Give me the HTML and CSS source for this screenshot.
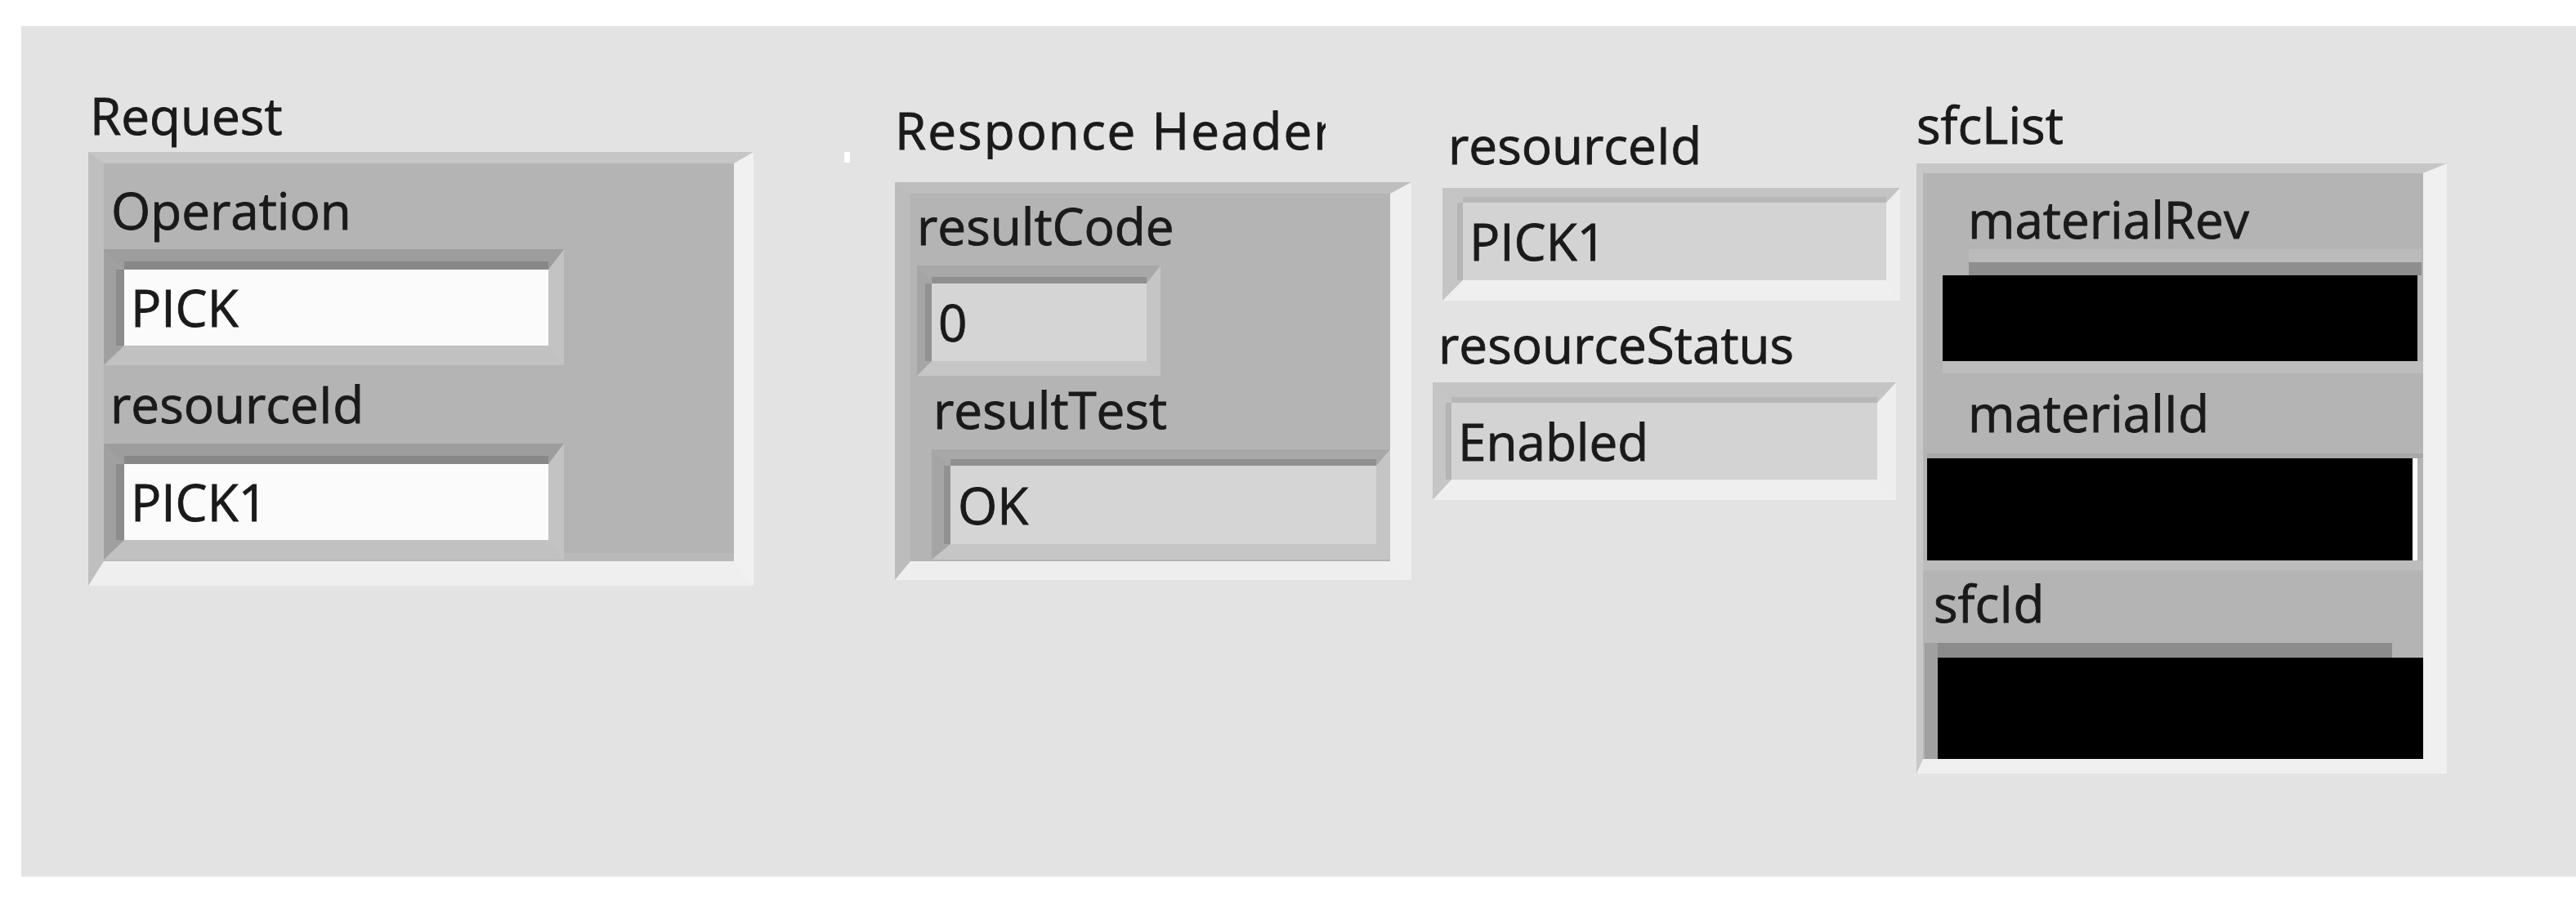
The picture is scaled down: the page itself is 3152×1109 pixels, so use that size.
FILE: index.html
```html
<!DOCTYPE html>
<html lang="en">
<head>
<meta charset="utf-8">
<title>Front panel</title>
<link rel="stylesheet" href="styles.css">
</head>
<body>
<main class="panel">
  <span class="tick"></span>

  <section class="col col-request">
    <div class="lbl lbl-request">Request</div>
    <div class="cluster cluster-request">
      <div class="lbl lbl-op">Operation</div>
      <div class="frame ctl f-req"><div class="val val-ctl">PICK</div></div>
      <div class="lbl lbl-rid">resourceId</div>
      <div class="frame ctl f-req f-req2"><div class="val val-ctl">PICK1</div></div>
    </div>
  </section>

  <section class="col col-resp">
    <div class="lbl lbl-resp">Responce Header</div>
    <div class="cluster cluster-resp">
      <div class="lbl lbl-code">resultCode</div>
      <div class="frame ind-in f-code"><div class="val val-in val-code">0</div></div>
      <div class="lbl lbl-test">resultTest</div>
      <div class="frame ind-in f-test"><div class="val val-in val-test">OK</div></div>
    </div>
  </section>

  <section class="col col-res">
    <div class="lbl lbl-resid">resourceId</div>
    <div class="frame ind-out f-resid"><div class="val val-out val-resid">PICK1</div></div>
    <div class="lbl lbl-status">resourceStatus</div>
    <div class="frame ind-out f-status"><div class="val val-out val-status">Enabled</div></div>
  </section>

  <section class="col col-sfc">
    <div class="lbl lbl-sfclist">sfcList</div>
    <div class="array">
      <div class="lbl lbl-mrev">materialRev</div>
      <div class="band band1"></div>
      <div class="redact r1"></div>
      <div class="sep sep1"></div>
      <div class="lbl lbl-mid">materialId</div>
      <div class="band band2"></div>
      <div class="redact r2"></div>
      <div class="sep sep2"></div>
      <div class="lbl lbl-sfcid">sfcId</div>
      <div class="frame3">
        <div class="band band3"></div>
        <div class="redact r3"></div>
      </div>
    </div>
  </section>
</main>
</body>
</html>
```

FILE: styles.css
```css
* { box-sizing: content-box; }

html, body {
  margin: 0;
  padding: 0;
  background: #ffffff;
}

body {
  font-family: "Open Sans", "Noto Sans", "DejaVu Sans", sans-serif;
  color: #1a1a1a;
}

.panel {
  position: relative;
  margin: 32px 0 0 26px;
  width: 3126px;
  height: 1041px;
  background: #e3e3e3;
  display: flex;
  align-items: flex-start;
}

.tick {
  position: absolute;
  left: 1007px;
  top: 154px;
  width: 7px;
  height: 13px;
  background: #ffffff;
}

.col {
  display: flex;
  flex-direction: column;
  align-items: flex-start;
}

.lbl {
  font-size: 62px;
  line-height: 72px;
  height: 72px;
  white-space: nowrap;
  color: #1a1a1a;
  -webkit-text-stroke: 0.9px #1a1a1a;
}

/* ---------- column 1 : Request ---------- */
.col-request { margin-left: 82px; margin-top: 73px; width: 814px; }
.lbl-request { padding-left: 2px; margin-bottom: 9px; }

.cluster {
  background: #b4b4b4;
  border-style: solid;
  display: flex;
  flex-direction: column;
  align-items: flex-start;
}

.cluster-request {
  width: 771px;
  border-width: 14px 24px 30px 19px;
  border-color: #c6c6c6 #f1f1f1 #efefef #bfbfbf;
  padding-top: 21px;
  padding-bottom: 2px;
  box-shadow: inset 0 -10px 0 #b9b9b9;
}

.lbl-op { padding-left: 9px; margin-bottom: 12px; }
.lbl-rid { padding-left: 8px; margin-top: 11px; margin-bottom: 13px; }

.frame { border-style: solid; }

.val {
  font-size: 62px;
  padding-left: 8px;
  white-space: nowrap;
  color: #1a1a1a;
  -webkit-text-stroke: 0.9px #1a1a1a;
  box-sizing: border-box;
}

.ctl { border-color: #9d9d9d #c3c3c3 #c1c1c1 #a0a0a0; }
.f-req { border-width: 25px 19px 24px 25px; }

.val-ctl {
  width: 519px;
  height: 93px;
  line-height: 93px;
  background: #fbfbfb;
  box-shadow: 0 -10px 0 #888888, -10px 0 0 #8c8c8c;
}

/* ---------- column 2 : Responce Header ---------- */
.col-resp { margin-left: 173px; margin-top: 91px; width: 632px; }

.lbl-resp {
  width: 527px;
  overflow: hidden;
  letter-spacing: 2px;
  margin-bottom: 28px;
}

.cluster-resp {
  width: 587px;
  border-width: 14px 26px 23px 19px;
  border-color: #bebebe #efefef #eeeeee #bcbcbc;
  padding-top: 3px;
  padding-bottom: 2px;
}

.lbl-code { padding-left: 8px; margin-bottom: 13px; }
.lbl-test { padding-left: 28px; margin-top: 5px; margin-bottom: 13px; }

.ind-in { border-color: #a8a8a8 #c5c5c5 #c6c6c6 #a5a5a5; }

.val-in {
  background: #d5d5d5;
  box-shadow: 0 -8px 0 #8f8f8f, -8px 0 0 #919191;
}

.f-code { border-width: 22px 17px 18px 18px; margin-left: 8px; }
.val-code { width: 263px; height: 95px; line-height: 95px; }

.f-test { border-width: 20px 17px 19px 23px; margin-left: 26px; }
.val-test { width: 521px; height: 96px; line-height: 96px; padding-left: 9px; }

/* ---------- column 3 : resource ---------- */
.col-res { margin-left: 26px; margin-top: 109px; width: 572px; }

.lbl-resid { padding-left: 19px; margin-bottom: 17px; }
.lbl-status { padding-left: 7px; margin-top: 17px; margin-bottom: 11px; }

.ind-out { border-color: #c4c4c4 #eeeeee #efefef #c5c5c5; }

.val-out {
  background: #d3d3d3;
  box-shadow: 0 -7px 0 #b7b7b7, -7px 0 0 #b4b4b4;
}

.f-resid { border-width: 18px 17px 25px 25px; margin-left: 12px; }
.val-resid { width: 518px; height: 95px; line-height: 95px; }

.f-status { border-width: 25px 23px 25px 23px; }
.val-status { width: 521px; height: 94px; line-height: 94px; }

/* ---------- column 4 : sfcList ---------- */
.col-sfc { margin-left: 20px; margin-top: 84px; width: 649px; }
.lbl-sfclist { margin-bottom: 12px; }

.array {
  width: 612px;
  background: #b4b4b4;
  border-style: solid;
  border-width: 12px 29px 18px 8px;
  border-color: #c6c6c6 #f0f0f0 #f0f0f0 #c8c8c8;
  padding-top: 20px;
  display: flex;
  flex-direction: column;
  align-items: flex-start;
}

.lbl-mrev { padding-left: 55px; }
.lbl-mid { padding-left: 55px; margin-top: 12px; }
.lbl-sfcid { padding-left: 13px; margin-top: 4px; }

.band { background: #8e8e8e; }
.band1 {
  margin-top: 1px;
  margin-left: 56px;
  width: 554px;
  height: 16px;
  border-top: 16px solid #bbbbbb;
}
.band2 {
  margin-top: 14px;
  margin-left: 5px;
  width: 607px;
  height: 6px;
  background: #a8a8a8;
}
.band3 {
  width: 556px;
  height: 18px;
  background: #8c8c8c;
}

.redact { background: #000000; }
.r1 { margin-left: 24px; width: 581px; height: 105px; }
.r2 { margin-left: 5px; width: 594px; height: 125px; border-right: 6px solid #ffffff; }
.r3 { width: 594px; height: 124px; }

.sep { background: #bdbdbd; }
.sep1 { margin-left: 24px; width: 588px; height: 15px; }
.sep2 { width: 612px; height: 12px; }

.frame3 {
  margin-top: 13px;
  margin-left: 2px;
  border-left: 16px solid #a0a0a0;
  width: 594px;
}
```
